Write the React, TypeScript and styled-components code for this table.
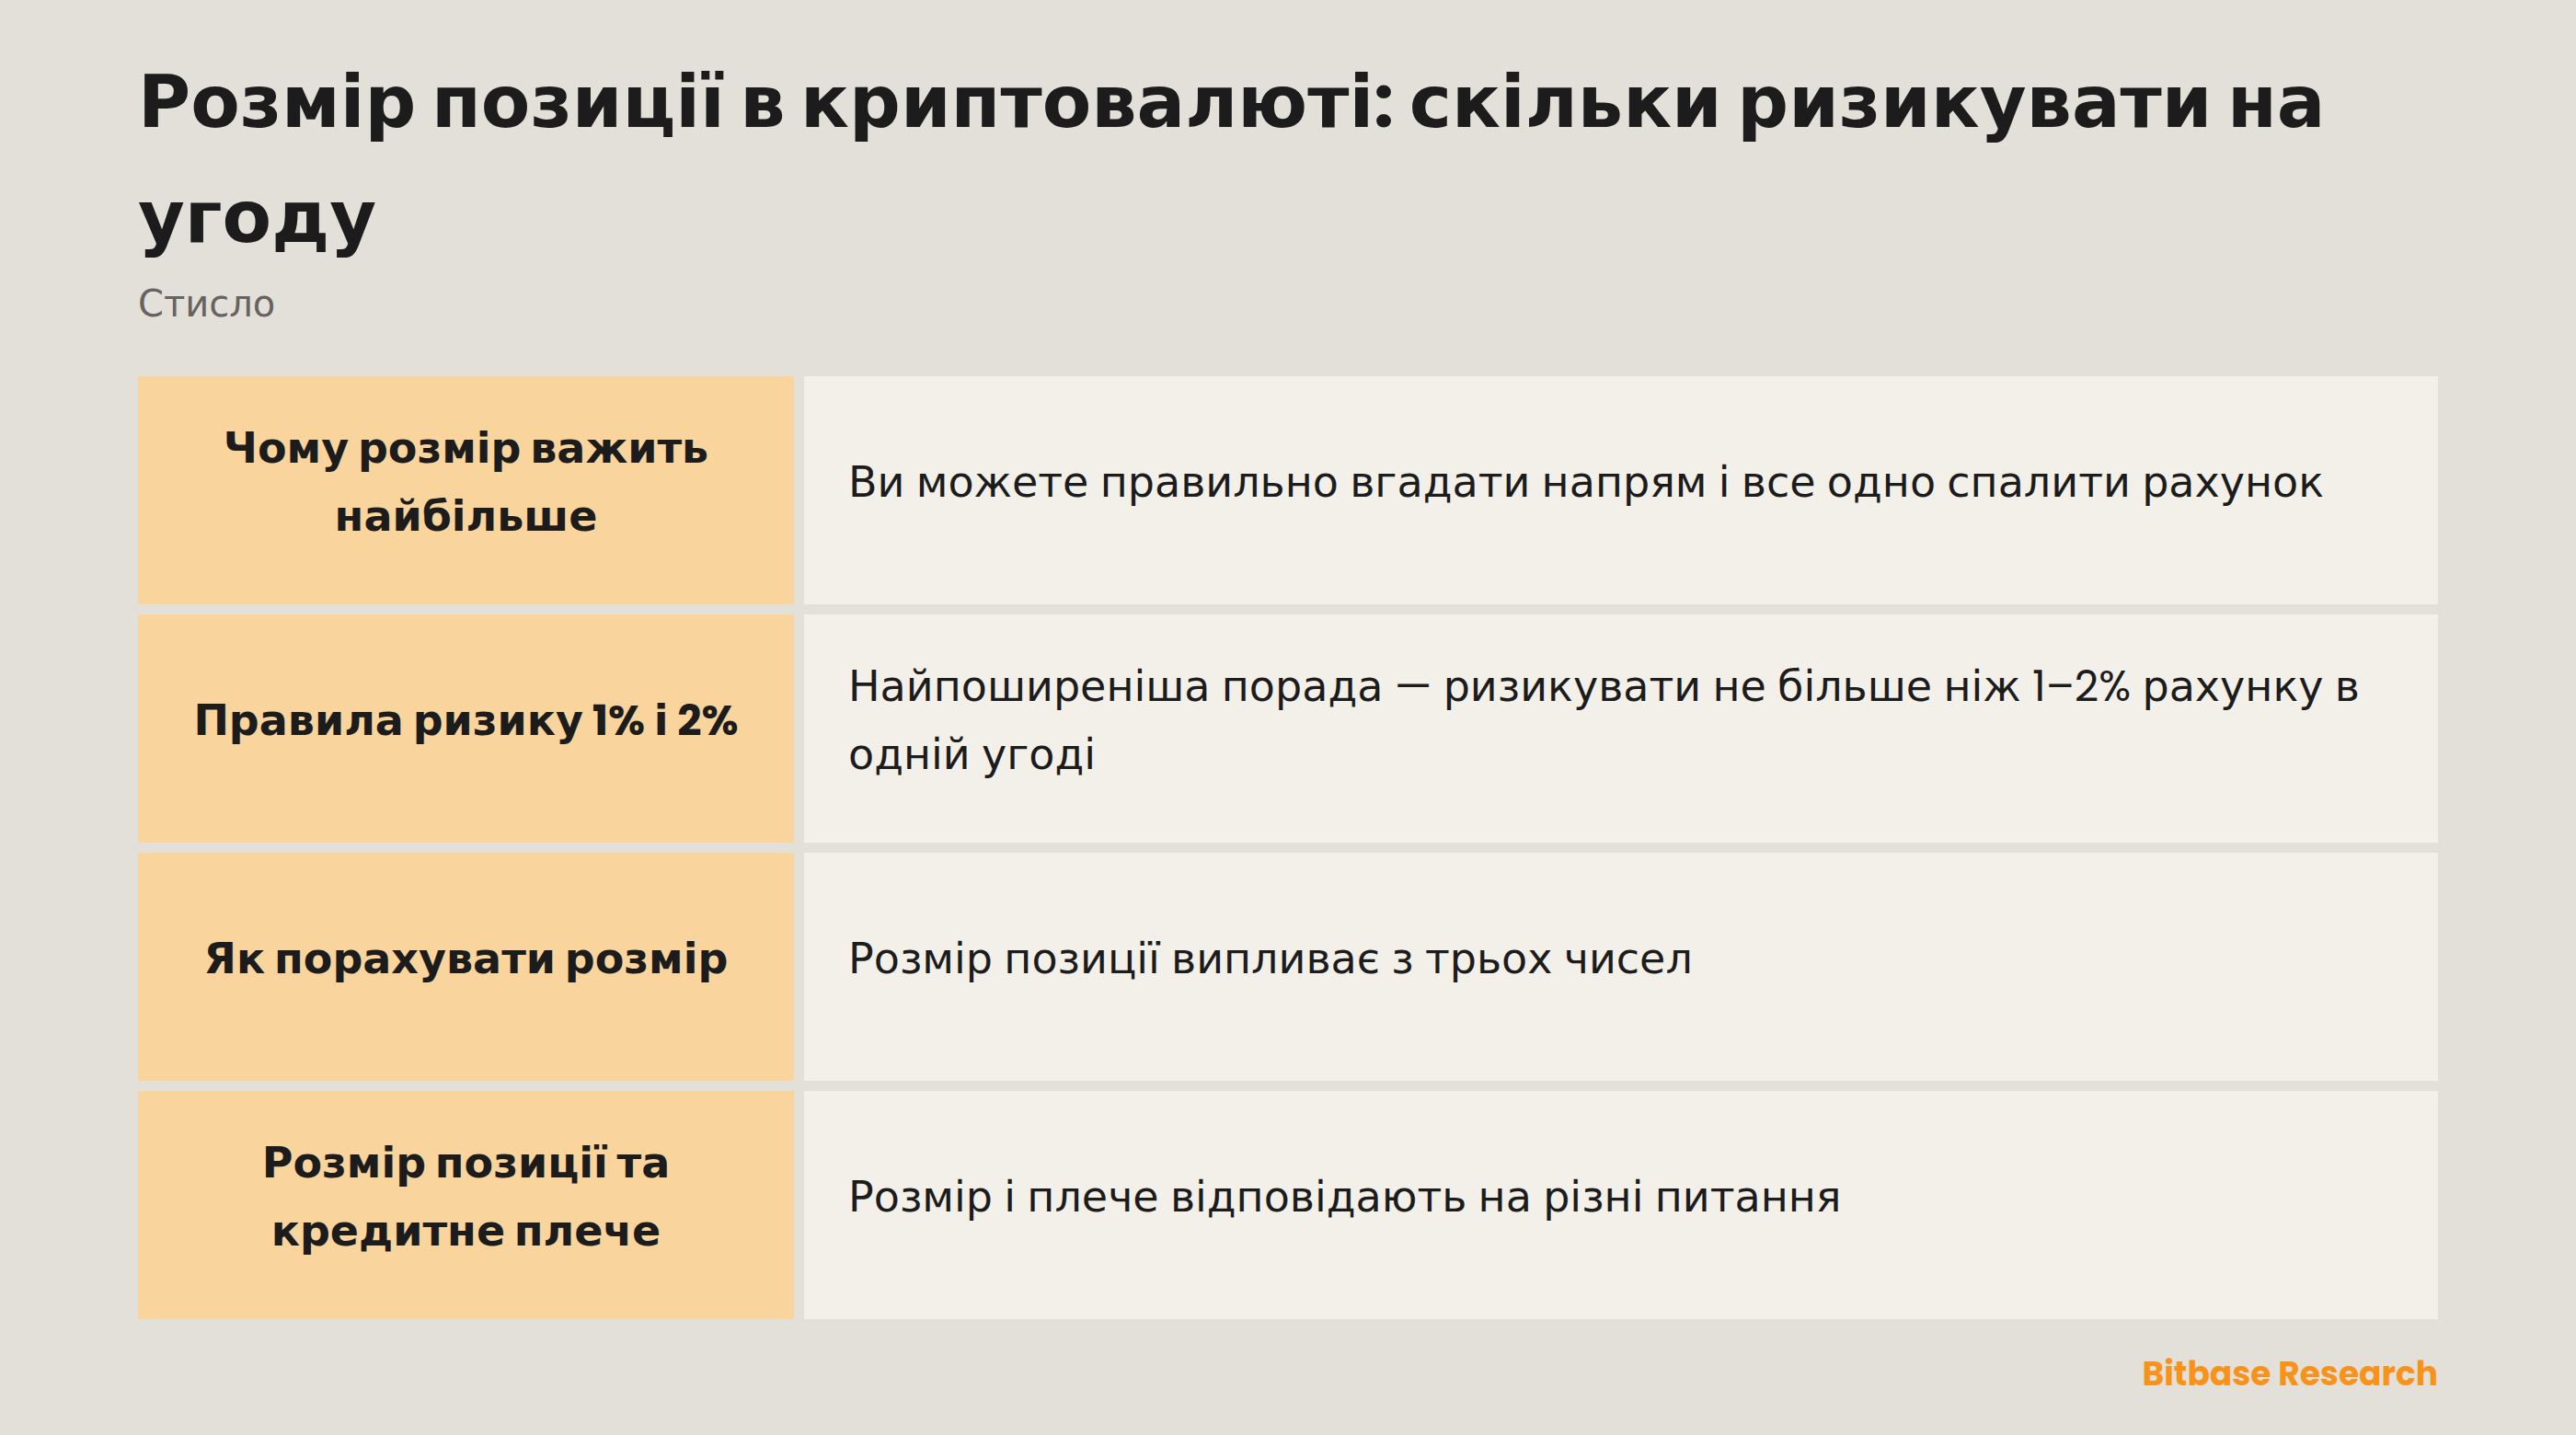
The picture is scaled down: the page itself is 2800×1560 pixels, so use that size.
import React from "react";
import styled, { createGlobalStyle } from "styled-components";

const GlobalStyle = createGlobalStyle`
  html, body {
    margin: 0;
    padding: 0;
    background: #e3dfd9;
  }
  body {
    font-family: Poppins, "DejaVu Sans", sans-serif;
    color: #1c1c1c;
  }
`;

const Page = styled.div`
  width: 2800px;
  height: 1560px;
  box-sizing: border-box;
  padding: 49px 150px 0 150px;
  display: flex;
  flex-direction: column;
  background: #e3dfd9;
`;

const Title = styled.h1`
  margin: 0;
  font-size: 78px;
  line-height: 1.6;
  font-weight: 700;
  color: #1c1c1c;
`;

const Subtitle = styled.div`
  margin-top: 3px;
  font-size: 40px;
  line-height: 1.4;
  color: #666361;
`;

const Table = styled.div`
  margin-top: 51px;
  display: grid;
  grid-template-columns: 713px 1fr;
  grid-auto-rows: 248px;
  gap: 11px;
`;

const Label = styled.div`
  background: #f9d49c;
  display: flex;
  align-items: center;
  justify-content: center;
  text-align: center;
  padding: 0 48px 16px;
  font-size: 46px;
  line-height: 1.6;
  font-weight: 700;
  color: #1c1c1c;
`;

const Value = styled.div`
  background: #f3f0ea;
  display: flex;
  align-items: center;
  padding: 0 48px 16px;
  font-size: 46px;
  line-height: 1.6;
  color: #1c1c1c;
`;

const Footer = styled.div`
  margin-top: 35px;
  display: flex;
  justify-content: flex-end;
`;

const Brand = styled.div`
  font-size: 36px;
  line-height: 1.4;
  font-weight: 700;
  color: #f7931a;
`;

const rows: { label: string; value: string }[] = [
  {
    label: "Чому розмір важить найбільше",
    value: "Ви можете правильно вгадати напрям і все одно спалити рахунок",
  },
  {
    label: "Правила ризику 1% і 2%",
    value:
      "Найпоширеніша порада — ризикувати не більше ніж 1–2% рахунку в одній угоді",
  },
  {
    label: "Як порахувати розмір",
    value: "Розмір позиції випливає з трьох чисел",
  },
  {
    label: "Розмір позиції та кредитне плече",
    value: "Розмір і плече відповідають на різні питання",
  },
];

export default function App() {
  return (
    <>
      <GlobalStyle />
      <Page>
        <Title>
          Розмір позиції в криптовалюті: скільки ризикувати на угоду
        </Title>
        <Subtitle>Стисло</Subtitle>
        <Table>
          {rows.map((r) => (
            <React.Fragment key={r.label}>
              <Label>{r.label}</Label>
              <Value>{r.value}</Value>
            </React.Fragment>
          ))}
        </Table>
        <Footer>
          <Brand>Bitbase Research</Brand>
        </Footer>
      </Page>
    </>
  );
}
